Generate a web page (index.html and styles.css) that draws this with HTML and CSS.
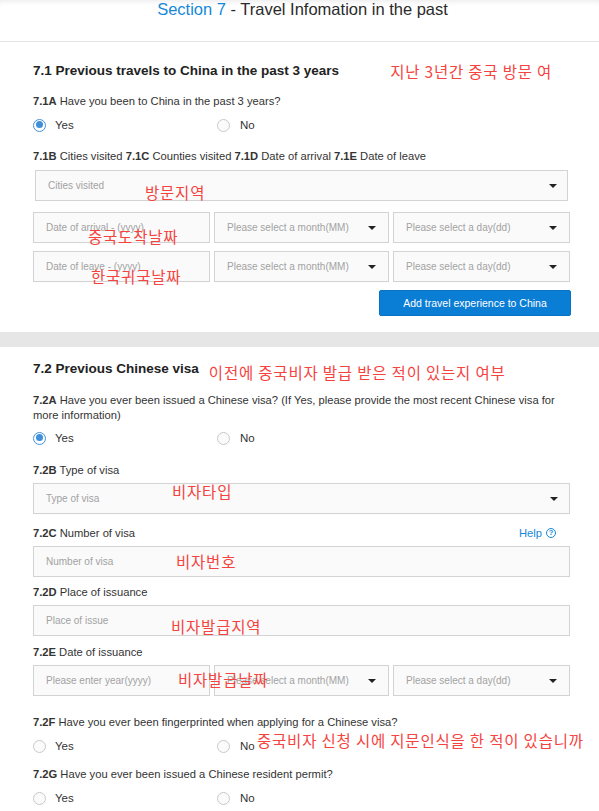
FILE: index.html
```html
<!DOCTYPE html>
<html lang="en">
<head>
<meta charset="utf-8">
<title>Section 7 - Travel Infomation in the past</title>
<link rel="stylesheet" href="styles.css">
</head>
<body>
<div class="topbar"><span class="blue">Section 7</span> - Travel Infomation in the past</div>

<section class="sec s1">
  <div class="head">
    <h2>7.1 Previous travels to China in the past 3 years</h2>
    <span class="note note-h1">지난 3년간 중국 방문 여</span>
  </div>
  <p class="q q1a"><b>7.1A</b> Have you been to China in the past 3 years?</p>
  <div class="radios r1a">
    <label class="opt"><span class="radio on"></span>Yes</label>
    <label class="opt"><span class="radio"></span>No</label>
  </div>
  <p class="q q1b"><b>7.1B</b> Cities visited <b>7.1C</b> Counties visited <b>7.1D</b> Date of arrival <b>7.1E</b> Date of leave</p>
  <div class="field select cities">
    <span class="ph">Cities visited</span><span class="arrow"></span>
    <span class="note n-cities">방문지역</span>
  </div>
  <div class="daterow dr1">
    <div class="field"><span class="ph">Date of arrival - (yyyy)</span></div>
    <div class="field select"><span class="ph">Please select a month(MM)</span><span class="arrow"></span></div>
    <div class="field select"><span class="ph">Please select a day(dd)</span><span class="arrow"></span></div>
    <span class="note n-arr">중국도착날짜</span>
  </div>
  <div class="daterow dr2">
    <div class="field"><span class="ph">Date of leave - (yyyy)</span></div>
    <div class="field select"><span class="ph">Please select a month(MM)</span><span class="arrow"></span></div>
    <div class="field select"><span class="ph">Please select a day(dd)</span><span class="arrow"></span></div>
    <span class="note n-leave">한국귀국날짜</span>
  </div>
  <div class="btnrow"><button class="btn" type="button">Add travel experience to China</button></div>
</section>

<div class="band"></div>

<section class="sec s2">
  <div class="head">
    <h2>7.2 Previous Chinese visa</h2>
    <span class="note note-h2">이전에 중국비자 발급 받은 적이 있는지 여부</span>
  </div>
  <p class="q q2a"><b>7.2A</b> Have you ever been issued a Chinese visa? (If Yes, please provide the most recent Chinese visa for more information)</p>
  <div class="radios r2a">
    <label class="opt"><span class="radio on"></span>Yes</label>
    <label class="opt"><span class="radio"></span>No</label>
  </div>
  <p class="q q2b"><b>7.2B</b> Type of visa</p>
  <div class="field select visatype">
    <span class="ph">Type of visa</span><span class="arrow"></span>
    <span class="note n-type">비자타입</span>
  </div>
  <div class="q q2c labelrow">
    <span><b>7.2C</b> Number of visa</span>
    <span class="help">Help <span class="qicon">?</span></span>
  </div>
  <div class="field input visanum">
    <span class="ph">Number of visa</span>
    <span class="note n-num">비자번호</span>
  </div>
  <p class="q q2d"><b>7.2D</b> Place of issuance</p>
  <div class="field input visaplace">
    <span class="ph">Place of issue</span>
    <span class="note n-place">비자발급지역</span>
  </div>
  <p class="q q2e"><b>7.2E</b> Date of issuance</p>
  <div class="daterow dr3">
    <div class="field"><span class="ph">Please enter year(yyyy)</span></div>
    <div class="field select"><span class="ph">Please select a month(MM)</span><span class="arrow"></span></div>
    <div class="field select"><span class="ph">Please select a day(dd)</span><span class="arrow"></span></div>
    <span class="note n-date">비자발급날짜</span>
  </div>
  <p class="q q2f"><b>7.2F</b> Have you ever been fingerprinted when applying for a Chinese visa?</p>
  <div class="radios r2f">
    <label class="opt"><span class="radio"></span>Yes</label>
    <label class="opt"><span class="radio"></span>No</label>
    <span class="note n-finger">중국비자 신청 시에 지문인식을 한 적이 있습니까</span>
  </div>
  <p class="q q2g"><b>7.2G</b> Have you ever been issued a Chinese resident permit?</p>
  <div class="radios r2g">
    <label class="opt"><span class="radio"></span>Yes</label>
    <label class="opt"><span class="radio"></span>No</label>
  </div>
</section>
</body>
</html>
```
FILE: styles.css
```css
html, body {
  margin: 0;
  padding: 0;
  background: #fff;
}
body {
  width: 599px;
  height: 811px;
  overflow: hidden;
  font-family: "Liberation Sans", Arial, sans-serif;
  color: #333;
}

.topbar {
  height: 41px;
  border-bottom: 1px solid #e3e3e3;
  text-align: center;
  padding-left: 6px;
  font-size: 16.5px;
  line-height: 18px;
  color: #2b2b2b;
  box-shadow: inset 0 5px 5px -3px rgba(0, 0, 0, 0.07);
}
.blue { color: #1788d8; }

.sec {
  padding: 0 29px 0 33px;
}
.s1 { padding-top: 21px; padding-bottom: 16px; }
.s2 { padding-top: 14px; }

.band {
  height: 15px;
  background: #e6e6e6;
}

.head {
  display: flex;
  align-items: center;
  height: 16px;
}
.head h2 {
  margin: 0;
  font-size: 13.5px;
  line-height: 16px;
  font-weight: bold;
  color: #222;
  white-space: nowrap;
}

.note {
  font-family: "Noto Sans CJK KR", "Noto Sans", sans-serif;
  font-size: 15.5px;
  letter-spacing: 0.8px;
  line-height: 15px;
  color: #f5433f;
  white-space: nowrap;
}
.note-h1 { margin-left: 51px; margin-top: 1px; }
.note-h2 { margin-left: 10px; margin-top: 6px; }

.q {
  margin: 0;
  font-size: 11.2px;
  line-height: 16px;
  color: #333;
}
.q b { color: #333; }
.q1a { margin-top: 14px; }
.q1b { margin-top: 15px; }
.q2a { margin-top: 16px; line-height: 15px; }
.q2b { margin-top: 16px; }
.q2c { margin-top: 11px; }
.q2d { margin-top: 7px; }
.q2e { margin-top: 8px; }
.q2f { margin-top: 18px; }
.q2g { margin-top: 12px; }

.labelrow {
  display: flex;
  justify-content: space-between;
  padding-right: 14px;
}
.help {
  color: #1788d8;
  display: flex;
  align-items: center;
  gap: 4px;
}
.qicon {
  display: inline-block;
  width: 8px;
  height: 8px;
  border: 1px solid #1788d8;
  border-radius: 50%;
  font-size: 7.5px;
  line-height: 8px;
  text-align: center;
  font-weight: bold;
}

.radios {
  position: relative;
  display: grid;
  grid-template-columns: 184px 184px;
  height: 16px;
  margin-top: 8px;
}
.r2a { margin-top: 7px; }
.opt {
  display: flex;
  align-items: center;
  font-size: 11.5px;
  color: #333;
}
.radio {
  box-sizing: border-box;
  width: 13px;
  height: 13px;
  border: 1px solid #c9c9c9;
  border-radius: 50%;
  background: #fbfbfb;
  margin-right: 9px;
  position: relative;
}
.opt + .opt .radio { margin-right: 10px; }
.radio.on {
  border: 1.5px solid #4391da;
  background: #fff;
}
.radio.on::after {
  content: "";
  position: absolute;
  left: 1.5px;
  top: 1.5px;
  width: 7px;
  height: 7px;
  border-radius: 50%;
  background: #3f8fd9;
}

.field {
  position: relative;
  box-sizing: border-box;
  height: 31px;
  border: 1px solid #d3d3d3;
  background: #fafafa;
  display: flex;
  align-items: center;
  justify-content: space-between;
  padding: 0 12px 0 12px;
}
.ph {
  font-size: 10px;
  color: #a2a2a2;
  white-space: nowrap;
}
.arrow {
  width: 0;
  height: 0;
  border-left: 4px solid transparent;
  border-right: 4px solid transparent;
  border-top: 4px solid #222;
}
.cities {
  margin: 6px 2px 0 2px;
  padding-right: 10px;
}
.visatype { margin-top: 5px; padding-right: 11px; }
.visanum, .visaplace { margin-top: 5px; }

.daterow {
  position: relative;
  display: grid;
  grid-template-columns: 177px 175px 177px;
  gap: 4px;
}
.dr1 { margin-top: 11px; }
.dr2 { margin-top: 8px; }
.dr3 { margin-top: 5px; }

.note.n-cities, .note.n-arr, .note.n-leave, .note.n-type, .note.n-num,
.note.n-place, .note.n-date, .note.n-finger {
  position: absolute;
}
.n-cities { left: 109px; top: 14px; }
.n-arr { left: 55px; top: 17px; }
.n-leave { left: 58px; top: 18px; }
.n-type { left: 138px; top: 0px; }
.n-num { left: 142px; top: 7px; }
.n-place { left: 137px; top: 13px; }
.n-date { left: 145px; top: 7px; }
.n-finger { left: 224px; top: -5px; }

.btnrow {
  display: flex;
  justify-content: flex-end;
  margin-top: 8px;
}
.btn {
  box-sizing: border-box;
  width: 192px;
  height: 26px;
  border: 1px solid #0a72c4;
  border-radius: 2px;
  background: #0a7dd5;
  color: #fff;
  font-family: "Liberation Sans", Arial, sans-serif;
  font-size: 10.5px;
  padding: 0;
  margin-right: -1px;
}
```
